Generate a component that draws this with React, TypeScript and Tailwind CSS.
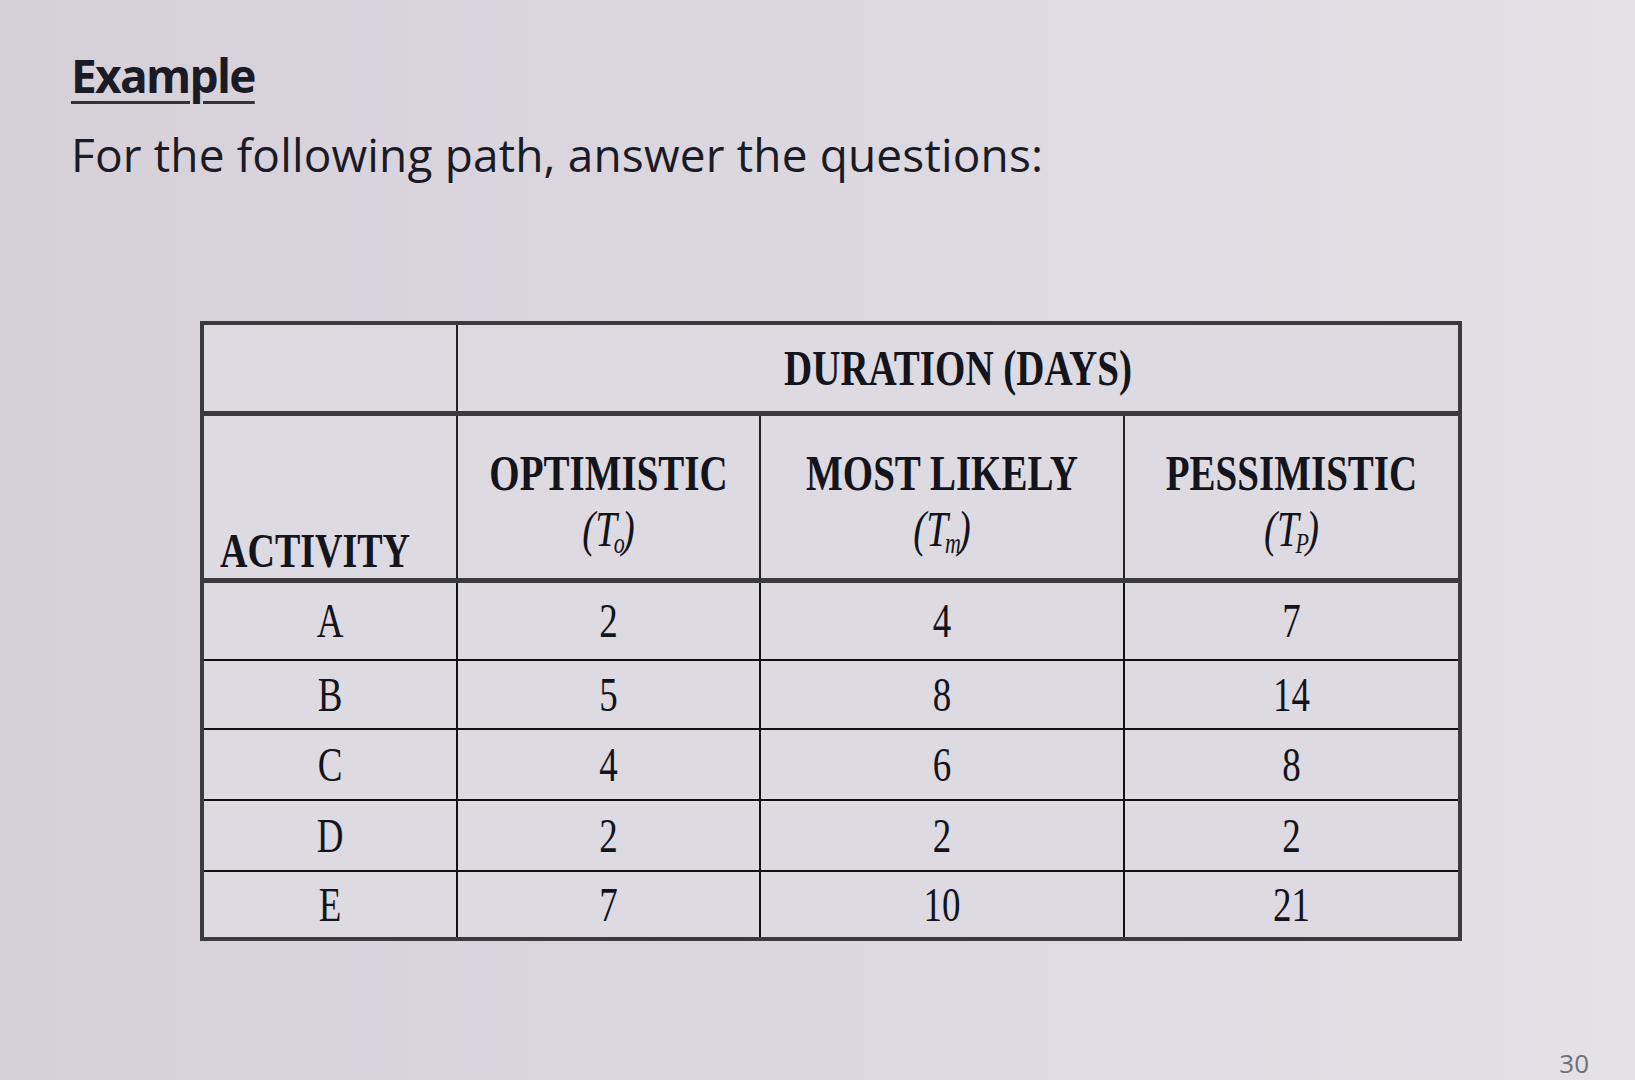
import React from "react";

type Row = { act: string; o: string; m: string; p: string; h: string };

const rows: Row[] = [
  { act: "A", o: "2", m: "4", p: "7", h: "h-[80px]" },
  { act: "B", o: "5", m: "8", p: "14", h: "h-[69px]" },
  { act: "C", o: "4", m: "6", p: "8", h: "h-[71px]" },
  { act: "D", o: "2", m: "2", p: "2", h: "h-[71px]" },
  { act: "E", o: "7", m: "10", p: "21", h: "h-[68px]" },
];

// texto de la tabla: la foto lo estira en vertical
const Tall = ({ children, className = "" }: { children: React.ReactNode; className?: string }) => (
  <span className={"inline-block scale-y-[1.3] " + className}>{children}</span>
);

const HeadCell = ({ title, sub }: { title: string; sub: string }) => (
  <td className="border-x-[2px] border-[#222] text-center align-middle pt-[6px]">
    <Tall className="leading-[43px] font-bold text-[39px] text-[#14141c]">
      {title}
      <br />
      <span className="italic font-normal">
        (T<sub className="text-[22px] -ml-[3px] -mr-[3px] italic">{sub}</sub>)
      </span>
    </Tall>
  </td>
);

export default function App() {
  return (
    <div className="w-[1635px] h-[1080px] flex flex-col bg-linear-to-r from-[#d6d0d9] via-[#dcd8e0] to-[#e4e1e7] overflow-hidden">
      <div className="pl-[71px] pt-[52px] font-['Open_Sans',sans-serif] text-[#1b1b26]">
        <div className="text-[46px] leading-[46px] font-bold tracking-[-1.7px]">
          <span className="underline decoration-[3px] underline-offset-[8px] decoration-[#333]">Example</span>
        </div>
        <div className="mt-[33px] text-[46px] leading-[46px] tracking-[0.15px]">
          For the following path, answer the questions:
        </div>
      </div>

      <div className="pl-[200px] mt-[144px]">
        <table className="border-collapse border-[4px] border-[#3b3b3f] font-['Liberation_Serif',serif] text-[#14141c] bg-[#dedae1]">
          <colgroup>
            <col className="w-[255px]" />
            <col className="w-[303px]" />
            <col className="w-[364px]" />
            <col className="w-[336px]" />
          </colgroup>
          <tbody>
            <tr className="h-[90px] border-b-[5px] border-[#3b3b3f]">
              <td className="border-r-[2px] border-[#222]"></td>
              <td colSpan={3} className="text-center align-middle">
                <Tall className="text-[39px] font-bold">DURATION (DAYS)</Tall>
              </td>
            </tr>
            <tr className="h-[167px] border-b-[5px] border-[#3b3b3f]">
              <td className="align-bottom pl-[16px] pb-0 border-r-[2px] border-[#222]">
                <Tall className="text-[38px] font-bold translate-y-[1px]">ACTIVITY</Tall>
              </td>
              <HeadCell title="OPTIMISTIC" sub="o" />
              <HeadCell title="MOST LIKELY" sub="m" />
              <HeadCell title="PESSIMISTIC" sub="P" />
            </tr>
            {rows.map((r) => (
              <tr key={r.act} className={r.h + " border-b-[2px] border-[#111]"}>
                {[r.act, r.o, r.m, r.p].map((v, i) => (
                  <td key={i} className="border-x-[2px] border-[#111] text-center align-middle">
                    <Tall className="text-[37px]">{v}</Tall>
                  </td>
                ))}
              </tr>
            ))}
          </tbody>
        </table>
      </div>

      <div className="flex-1" />
      <div className="flex justify-end pr-[46px] pb-[3px] font-['Open_Sans',sans-serif] text-[26px] leading-[28px] text-[#707078]">
        30
      </div>
    </div>
  );
}
